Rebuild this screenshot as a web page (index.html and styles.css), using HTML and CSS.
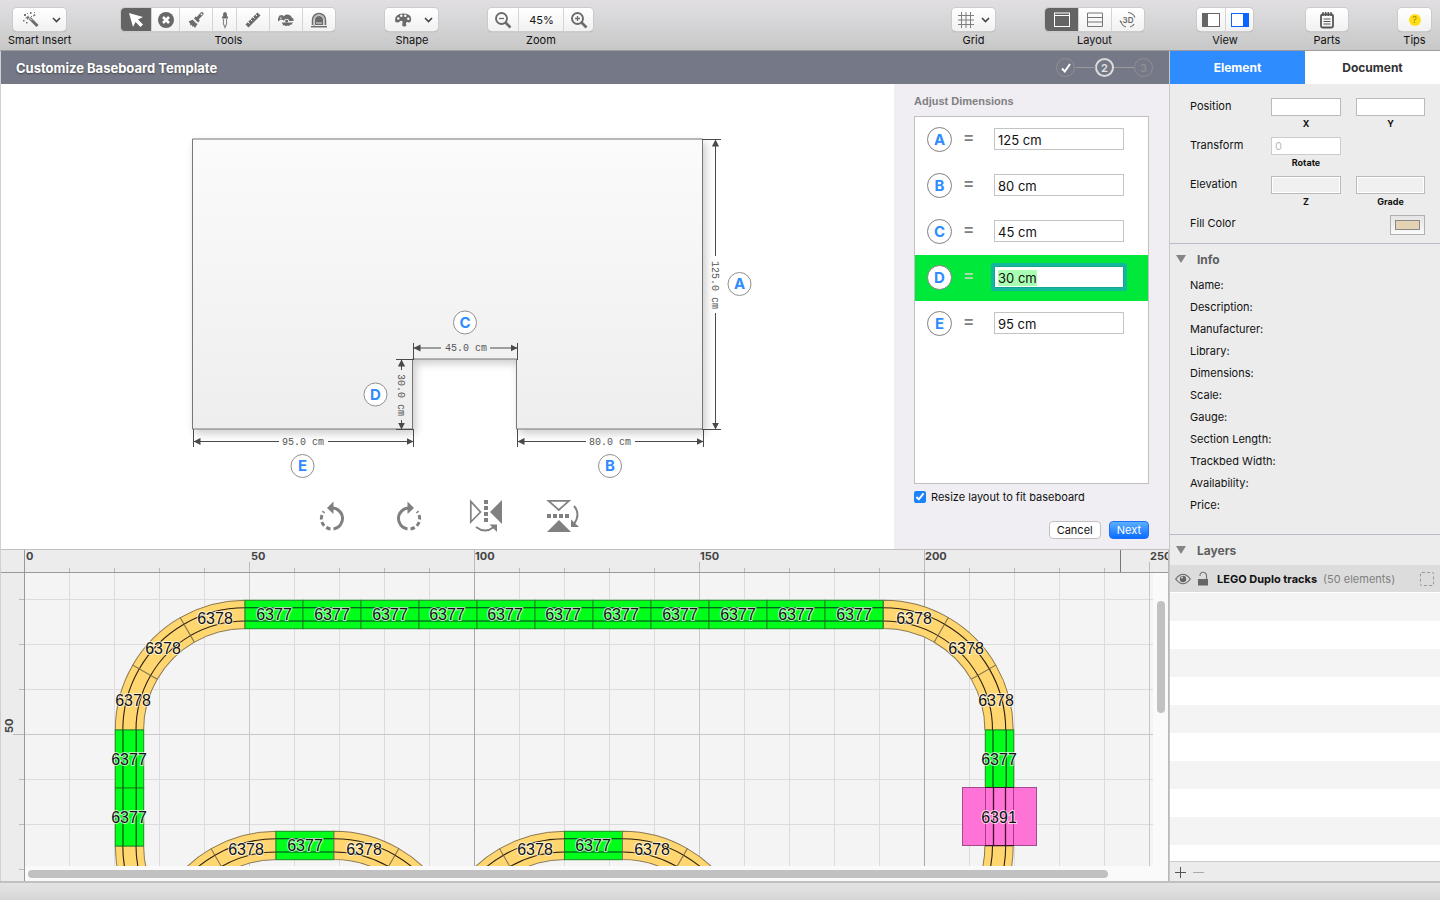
FILE: index.html
```html
<!DOCTYPE html>
<html lang="en">
<head>
    <meta charset="UTF-8">
    <meta name="viewport" content="width=device-width, initial-scale=1.0">
    <title>Customize Baseboard Template</title>
    <link rel="stylesheet" href="styles.css">
</head>
<body>
    <header class="toolbar">
        <div class="group">
            <div class="segments">
                <button class="menu-btn" aria-label="Smart Insert">
                    <svg width="18" height="18" viewBox="0 0 18 18"><path d="M7.500 7l8 8" stroke="#6b6b6b" stroke-width="3"/><path d="M6.800 6.300l3 3" stroke="#fff" stroke-width="1"/><g fill="#777"><path d="M5 5.500l1.500-1 .3 1.500 1.200 1-1.700.4-.8 1.600-.7-1.600-1.600-.4 1.300-1zM2 3h2v2H2zM8 1h1.500v2H8zM11 4l2-1 .5 1.500-2 1zM1 9h1.500v1.500H1zM4 11h1.500v1.500H4zM9 5h1v1H9zM12 1h1v1h-1zM5 2h1v1H5z"/></g></svg>
                    <svg width="9" height="6" viewBox="0 0 9 6"><path d="M1 1l3.500 3.500L8 1" fill="none" stroke="#444" stroke-width="1.600"/></svg>
                </button>
            </div>
            <span class="caption">Smart Insert</span>
        </div>
        <div class="group">
            <div class="segments tools">
                <button class="active" aria-label="Select"><svg width="18" height="18" viewBox="0 0 18 18"><path d="M2 2l14 4-5 2.500 5 5-2.500 2.500-5-5L6 16z" fill="#fff"/></svg></button>
                <button aria-label="Delete"><svg width="18" height="18" viewBox="0 0 18 18"><circle cx="9" cy="9" r="8" fill="#686868"/><path d="M6 6l6 6M12 6l-6 6" stroke="#fff" stroke-width="2.600"/></svg></button>
                <button aria-label="Brush"><svg width="18" height="18" viewBox="0 0 18 18"><path d="M1.500 10.500L6 8.500l4.500 4.500L8 17l-1.500-2-.8 1-1.200-2.200-1 1-.5-2.500z" fill="#6b6b6b"/><path d="M7 7.500l4 4 1.800-1.800-1-1.500 4.500-4.500q1-2-.8-2.400-.7-.6-2 .5L9.800 6 8.500 5.500z" fill="#6b6b6b"/><circle cx="14.500" cy="3.300" r=".9" fill="#fff"/><path d="M6 8.500l4 4" stroke="#fff"/></svg></button>
                <button aria-label="Eyedropper"><svg width="10" height="18" viewBox="0 0 10 18"><path d="M5 1q2 0 2 2.500l-.3 2H8V7.500H2V5.500h1.300L3 3.500Q3 1 5 1z" fill="#6b6b6b"/><path d="M3.500 8v5L5 16.500 6.500 13V8" fill="#fff" stroke="#888" stroke-width="1.200"/></svg></button>
                <button aria-label="Ruler"><svg width="18" height="18" viewBox="0 0 18 18"><path d="M1.500 13.500l12-12 3 3-12 12z" fill="#6b6b6b"/><path d="M4 11l1.500 1.500M6.500 8.500L8 10M9 6l1.500 1.500M11.500 3.500L13 5" stroke="#fff"/></svg></button>
                <button aria-label="Saw"><svg width="18" height="18" viewBox="0 0 18 18"><path d="M1 10.500V7.500l1.500-3 3-.5 1 1.500Q8 3.500 10 3.500q4 .3 5 3.500l1.500.5-1 1H17l-.5 1.500h-4.300a2.700 2.700 0 0 0-5.200-.3L5 8.500 3 9z" fill="#6b6b6b"/><path d="M2.500 7.800l1.800-2v2z" fill="#fff"/><circle cx="9.600" cy="10" r="1.500" fill="#6b6b6b"/><path d="M4.500 11.500h12l-1.500 1v1l-2 .3-1 1.200-1.500-.5-1.500.8-1.200-1-1.800.2-.3-1.500z" fill="#6b6b6b"/></svg></button>
                <button aria-label="Tunnel"><svg width="18" height="18" viewBox="0 0 18 18"><path d="M2.500 14V9a6.500 6.500 0 0 1 13 0v5" fill="#fff" stroke="#6b6b6b" stroke-width="1.500"/><path d="M5 14V9a4 4 0 0 1 8 0v5z" fill="#6b6b6b"/><path d="M4 15V9a5 5 0 0 1 10 0v5" fill="none" stroke="#888" stroke-width=".8"/><path d="M1 15.700h16" stroke="#6b6b6b" stroke-width="1.500"/><path d="M6 12h6" stroke="#fff" stroke-width=".8"/></svg></button>
            </div>
            <span class="caption">Tools</span>
        </div>
        <div class="group">
            <div class="segments">
                <button class="menu-btn" aria-label="Shape">
                    <svg width="18" height="18" viewBox="0 0 18 18"><path d="M1 9Q1 3 9 2.500q8 0 8.200 5.500-.2 4-2.700 3.500-1.500-1-2.500.5-.5 1.500.5 2-.5 2-3 1.500-2-1-1-3.500Q9 9 6.500 10 5 11.500 3 11.500 1 11.500 1 9z" fill="#6b6b6b"/><g fill="#fff"><circle cx="4.300" cy="7.500" r="1.200"/><circle cx="7.300" cy="4.800" r="1.200"/><circle cx="11.300" cy="4.800" r="1.200"/><circle cx="14.300" cy="7.800" r="1.200"/></g></svg>
                    <svg width="9" height="6" viewBox="0 0 9 6"><path d="M1 1l3.500 3.500L8 1" fill="none" stroke="#444" stroke-width="1.600"/></svg>
                </button>
            </div>
            <span class="caption">Shape</span>
        </div>
        <div class="group">
            <div class="segments zoom">
                <button aria-label="Zoom out"><svg width="18" height="18" viewBox="0 0 18 18"><circle cx="7.500" cy="7.500" r="5.500" fill="none" stroke="#6b6b6b" stroke-width="1.900"/><path d="M11.500 11.500l5 5" stroke="#6b6b6b" stroke-width="2.600"/><path d="M5 7.500h5" stroke="#6b6b6b" stroke-width="1.300"/></svg></button>
                <button class="zoom-value">45%</button>
                <button aria-label="Zoom in"><svg width="18" height="18" viewBox="0 0 18 18"><circle cx="7.500" cy="7.500" r="5.500" fill="none" stroke="#6b6b6b" stroke-width="1.900"/><path d="M11.500 11.500l5 5" stroke="#6b6b6b" stroke-width="2.600"/><path d="M5 7.500h5M7.500 5v5" stroke="#6b6b6b" stroke-width="1.300"/></svg></button>
            </div>
            <span class="caption">Zoom</span>
        </div>
        <div class="group push">
            <div class="segments">
                <button class="menu-btn grid-btn" aria-label="Grid">
                    <svg width="16" height="16" viewBox="0 0 16 16"><path d="M3.500 0v16M8 0v16M12.500 0v16M0 3.500h16M0 8h16M0 12.500h16" stroke="#7d7d7d"/></svg>
                    <svg width="9" height="6" viewBox="0 0 9 6"><path d="M1 1l3.500 3.500L8 1" fill="none" stroke="#444" stroke-width="1.600"/></svg>
                </button>
            </div>
            <span class="caption">Grid</span>
        </div>
        <div class="group">
            <div class="segments layout">
                <button class="active" aria-label="2D layout"><svg width="18" height="16" viewBox="0 0 18 16"><rect x="1.500" y="1" width="15" height="13.500" fill="none" stroke="#fff"/><path d="M2 3.500h14" stroke="#fff"/></svg></button>
                <button aria-label="Split layout"><svg width="18" height="16" viewBox="0 0 18 16"><path d="M1.500 1h15v13.500h-15zM2 5.500h14M2 10h14" fill="none" stroke="#777"/></svg></button>
                <button aria-label="3D layout"><svg width="18" height="18" viewBox="0 0 18 18"><path d="M9 1.500q5.500.5 6.800 5M2 10q.5 4.500 5 6M14.500 4l1.500 2.500M2 11.500L1 9.500M11 16q3-.8 4-3" fill="none" stroke="#777" stroke-width="1.200"/><text x="9" y="12" text-anchor="middle" class="icon-3d">3D</text></svg></button>
            </div>
            <span class="caption">Layout</span>
        </div>
        <div class="group spaced">
            <div class="segments view">
                <button aria-label="Left panel"><svg width="18" height="14" viewBox="0 0 18 14"><rect x=".5" y=".5" width="17" height="13" fill="#fff" stroke="#666"/><path d="M1 1h5v12H1z" fill="#666"/></svg></button>
                <button aria-label="Right panel"><svg width="18" height="14" viewBox="0 0 18 14"><rect x=".5" y=".5" width="17" height="13" fill="#fff" stroke="#0a66ff"/><path d="M12 1h5v12h-5z" fill="#0a66ff"/></svg></button>
            </div>
            <span class="caption">View</span>
        </div>
        <div class="group">
            <div class="segments">
                <button class="parts-btn" aria-label="Parts"><svg width="16" height="18" viewBox="0 0 16 18"><rect x="2" y="3.500" width="12" height="13" rx="1.500" fill="none" stroke="#555" stroke-width="1.800"/><path d="M4 1v4M6.700 1v4M9.300 1v4M12 1v4" stroke="#555" stroke-width="1.500"/><path d="M4.500 8h7M4.500 10.500h7M4.500 13h7" stroke="#555"/></svg></button>
            </div>
            <span class="caption">Parts</span>
        </div>
        <div class="group">
            <div class="segments">
                <button class="tips-btn" aria-label="Tips"><span class="tip-dot">?</span></button>
            </div>
            <span class="caption">Tips</span>
        </div>
    </header>

    <main class="workspace">
        <div class="editor">
            <div class="wizard-head">
                <h1>Customize Baseboard Template</h1>
                <ol class="steps">
                    <li class="done"><svg width="12" height="12" viewBox="0 0 12 12"><path d="M2 6.500L4.800 9.500 10 2" fill="none" stroke="#fff" stroke-width="2"/></svg></li>
                    <li class="current">2</li>
                    <li>3</li>
                </ol>
            </div>

            <section class="wizard">
                <div class="preview">
                    <svg class="board" width="641" height="400" viewBox="127 84 641 400">
                        <defs>
                            <linearGradient id="boardFill" x1="0" y1="0" x2="0" y2="1">
                                <stop offset="0" stop-color="#fbfbfb"/>
                                <stop offset="1" stop-color="#eee"/>
                            </linearGradient>
                            <marker id="arrow" viewBox="0 0 7 8" refX="7" refY="4" markerWidth="7" markerHeight="8" markerUnits="userSpaceOnUse" orient="auto">
                                <path d="M0 .4L7 4L0 7.600z" fill="#4a4a4a"/>
                            </marker>
                        </defs>
                        <path class="board-shape" d="M192.500 139H702.500V429H516.500V359H412.500V429H192.500z"/>
                        <!-- extension lines -->
                        <path class="dim" d="M702 139.500h19M702 429.500h19M193.500 429v18M413.500 429v18M517.500 429v18M703.500 429v18M413.500 343v17M517.500 343v17M396 359.500h17M396 429.500h17"/>
                        <g class="dim" marker-end="url(#arrow)">
                            <path d="M715.500 256V139.500"/><path d="M715.500 313V429.500"/>
                            <path d="M279 441.500H193.500"/><path d="M328 441.500H413.500"/>
                            <path d="M586 441.500H517.500"/><path d="M635 441.500H703.500"/>
                            <path d="M441 348H413.500"/><path d="M490 348H517.500"/>
                            <path d="M401.500 370V359.500"/><path d="M401.500 420V429.500"/>
                        </g>
                        <g class="dim-text">
                            <text x="303" y="445">95.0 cm</text>
                            <text x="610" y="445">80.0 cm</text>
                            <text x="466" y="351">45.0 cm</text>
                            <text transform="translate(712 285) rotate(90)">125.0 cm</text>
                            <text transform="translate(398 395) rotate(90)">30.0 cm</text>
                        </g>
                        <g class="pins">
                            <circle cx="739.500" cy="284" r="11.500"/><text x="739.500" y="289">A</text>
                            <circle cx="610" cy="466" r="11.500"/><text x="610" y="471">B</text>
                            <circle cx="465" cy="322.500" r="11.500"/><text x="465" y="328">C</text>
                            <circle cx="375.500" cy="394.500" r="11.500"/><text x="375.500" y="400">D</text>
                            <circle cx="302.500" cy="466" r="11.500"/><text x="302.500" y="471">E</text>
                        </g>
                    </svg>
                    <div class="transforms">
                        <button aria-label="Rotate left"><svg width="36" height="36" viewBox="0 0 36 36"><path d="M18 10A10.500 10.500 0 0 1 19.500 30.900" fill="none" stroke="#808080" stroke-width="3"/><path d="M19.500 3.500v12.500L13 10z" fill="#808080"/><path d="M16.500 30.900A10.500 10.500 0 0 1 10 13.500" fill="none" stroke="#808080" stroke-width="3" stroke-dasharray="4.500 2.500"/></svg></button>
                        <button aria-label="Rotate right"><svg width="36" height="36" viewBox="0 0 36 36"><path d="M18 10A10.500 10.500 0 0 0 16.500 30.900" fill="none" stroke="#808080" stroke-width="3"/><path d="M16.500 3.500v12.500L23 10z" fill="#808080"/><path d="M19.500 30.900A10.500 10.500 0 0 0 26 13.500" fill="none" stroke="#808080" stroke-width="3" stroke-dasharray="4.500 2.500"/></svg></button>
                        <button aria-label="Flip horizontal"><svg width="36" height="36" viewBox="0 0 36 36"><path d="M2.800 3.500v20.500L12.500 14z" fill="none" stroke="#808080" stroke-width="1.700"/><path d="M34 2v24L22 14z" fill="#808080"/><path d="M18 2v24" stroke="#808080" stroke-width="4" stroke-dasharray="4 2"/><path d="M8 29q9 7 18 0" fill="none" stroke="#808080" stroke-width="1.900"/><path d="M21.500 26.500H29V34z" fill="#808080"/></svg></button>
                        <button aria-label="Flip vertical"><svg width="36" height="36" viewBox="0 0 36 36"><path d="M3.500 2.800h20.500L13.800 12z" fill="none" stroke="#808080" stroke-width="1.700"/><path d="M2 34h24L14 22z" fill="#808080"/><path d="M2 18h24" stroke="#808080" stroke-width="4" stroke-dasharray="4 2"/><path d="M29 8q7 8 0 18" fill="none" stroke="#808080" stroke-width="1.900"/><path d="M26 21.500V29h8z" fill="#808080"/></svg></button>
                    </div>
                </div>

                <form class="dimensions">
                    <h2>Adjust Dimensions</h2>
                    <ul class="dim-list">
                        <li><label for="dimA"><span class="pin">A</span>=</label><input type="text" id="dimA" value="125 cm"></li>
                        <li><label for="dimB"><span class="pin">B</span>=</label><input type="text" id="dimB" value="80 cm"></li>
                        <li><label for="dimC"><span class="pin">C</span>=</label><input type="text" id="dimC" value="45 cm"></li>
                        <li class="selected"><label for="dimD"><span class="pin">D</span>=</label><input type="text" id="dimD" value="30 cm"></li>
                        <li><label for="dimE"><span class="pin">E</span>=</label><input type="text" id="dimE" value="95 cm"></li>
                    </ul>
                    <div class="resize">
                        <input type="checkbox" id="resize" checked>
                        <label for="resize">Resize layout to fit baseboard</label>
                    </div>
                    <div class="actions">
                        <button type="button">Cancel</button>
                        <button type="button" class="primary">Next</button>
                    </div>
                </form>
            </section>

            <section class="plan">
                <div class="corner"></div>
                <svg class="ruler-h">
                    <defs>
                        <pattern id="ticksH" width="45" height="24" patternUnits="userSpaceOnUse" x="-1"><path d="M.5 18v6" stroke="#bbb"/></pattern>
                    </defs>
                    <rect width="100%" height="24" fill="url(#ticksH)"/>
                    <path d="M224.500 12v12M1124.500 12v12M674.500 12v12" stroke="#bbb"/>
                    <path d="M449.500 0v24M899.500 0v24" stroke="#bbb"/>
                    <path d="M1095.500 0v24" stroke="#777"/>
                    <g class="ruler-text">
                        <text x="1" y="10">0</text>
                        <text x="226" y="10">50</text>
                        <text x="450" y="10">100</text>
                        <text x="675" y="10">150</text>
                        <text x="900" y="10">200</text>
                        <text x="1125" y="10">250</text>
                    </g>
                </svg>
                <svg class="ruler-v">
                    <path d="M18 26.500h6M18 71.500h6M18 116.500h6M12 161.500h12M18 206.500h6M18 251.500h6M18 296.500h6" stroke="#bbb"/>
                    <text class="ruler-text" transform="translate(12 160) rotate(-90)">50</text>
                </svg>

                <svg class="canvas">
                    <defs>
                        <pattern id="grid" width="45" height="45" patternUnits="userSpaceOnUse" x="44" y="26">
                            <path d="M.5 0v45M0 .5h45" stroke="#dcdcdc" fill="none"/>
                        </pattern>
                        <g id="straight">
                            <rect x="0" y="-14.200" width="58" height="28.400" fill="#00ff1a" stroke="#1a8a20"/>
                            <path d="M0-6.700h58M0 6.500h58" stroke="#032" stroke-width="1.100"/>
                        </g>
                        <!-- one 30 degree curve, its circle centred on the origin -->
                        <g id="curve" fill="none">
                            <path d="M0-129.700A129.700 129.700 0 0 0-64.850-112.300L-50.700-87.800A101.400 101.400 0 0 1 0-101.400z" fill="#ffd670" stroke="#8a7850"/>
                            <path d="M0-122.200A122.200 122.200 0 0 0-61.100-105.800M0-109A109 109 0 0 0-54.500-94.400" stroke="#2a2210" stroke-width="1.100"/>
                        </g>
                        <g id="arch">
                            <use href="#curve" transform="rotate(-60)"/>
                            <use href="#curve" transform="rotate(-30)"/>
                            <use href="#curve"/>
                            <use href="#straight" y="-115.500"/>
                            <g transform="translate(58 0)">
                                <use href="#curve" transform="rotate(30)"/>
                                <use href="#curve" transform="rotate(60)"/>
                            </g>
                        </g>
                    </defs>
                    <rect width="100%" height="100%" fill="url(#grid)"/>
                    <path d="M224.500 0v294M674.500 0v294M1124.500 0v294M0 161.500h1130" stroke="#c8c8c8"/>
                    <path d="M449.500 0v294M899.500 0v294" stroke="#a8a8a8"/>

                    <g transform="translate(220 157)">
                        <use href="#curve"/>
                        <use href="#curve" transform="rotate(-30)"/>
                        <use href="#curve" transform="rotate(-60)"/>
                    </g>
                    <g transform="translate(858.500 157)">
                        <use href="#curve" transform="rotate(30)"/>
                        <use href="#curve" transform="rotate(60)"/>
                        <use href="#curve" transform="rotate(90)"/>
                    </g>
                    <g transform="translate(220 41.500)">
                        <use href="#straight"/>
                        <use href="#straight" x="58"/>
                        <use href="#straight" x="116"/>
                        <use href="#straight" x="174"/>
                        <use href="#straight" x="232"/>
                        <use href="#straight" x="290"/>
                        <use href="#straight" x="348"/>
                        <use href="#straight" x="406"/>
                        <use href="#straight" x="464"/>
                        <use href="#straight" x="522"/>
                        <use href="#straight" x="580"/>
                    </g>
                    <use href="#curve" transform="translate(220 273) rotate(-90)"/>
                    <use href="#curve" transform="translate(858.500 273) rotate(120)"/>
                    <use href="#straight" transform="translate(104.500 157) rotate(90)"/>
                    <use href="#straight" transform="translate(104.500 215) rotate(90)"/>
                    <use href="#straight" transform="translate(974.500 157) rotate(90)"/>
                    <rect x="937.500" y="214.500" width="74" height="58" fill="#ff73d6" stroke="#a04c8a"/>
                    <path d="M960.500 215v58M988.500 215v58" stroke="#a83c86"/>
                    <path d="M968.500 215v58M980.500 215v58" stroke="#401030" stroke-width="1.300"/>
                    <path d="M960 214.500h29M960 272.500h29" stroke="#401030"/>
                    <use href="#arch" transform="translate(251 388)"/>
                    <use href="#arch" transform="translate(539.500 388)"/>

                    <g class="track-text">
                        <text x="190" y="51">6378</text><text x="138" y="81">6378</text><text x="108" y="133">6378</text>
                        <text x="249" y="47">6377</text><text x="307" y="47">6377</text><text x="365" y="47">6377</text>
                        <text x="422" y="47">6377</text><text x="480" y="47">6377</text><text x="538" y="47">6377</text>
                        <text x="596" y="47">6377</text><text x="655" y="47">6377</text><text x="713" y="47">6377</text>
                        <text x="771" y="47">6377</text><text x="829" y="47">6377</text>
                        <text x="889" y="51">6378</text><text x="941" y="81">6378</text><text x="971" y="133">6378</text>
                        <text x="104" y="192">6377</text><text x="104" y="250">6377</text>
                        <text x="974" y="192">6377</text><text x="974" y="250">6391</text>
                        <text x="221" y="282">6378</text><text x="280" y="278">6377</text><text x="339" y="282">6378</text>
                        <text x="510" y="282">6378</text><text x="568" y="278">6377</text><text x="627" y="282">6378</text>
                    </g>
                </svg>
                <div class="scroll-v"><span></span></div>
                <div class="scroll-h"><span></span></div>
            </section>
        </div>

        <aside class="inspector">
            <nav class="tabs">
                <button class="active">Element</button>
                <button>Document</button>
            </nav>
            <form class="props">
                <span class="name">Position</span>
                <div class="field"><input type="text" id="posX"><label for="posX">X</label></div>
                <div class="field"><input type="text" id="posY"><label for="posY">Y</label></div>
                <span class="name">Transform</span>
                <div class="field"><input type="text" id="rotate" placeholder="0" class="faint"><label for="rotate">Rotate</label></div>
                <div></div>
                <span class="name">Elevation</span>
                <div class="field"><input type="text" id="elevZ" disabled><label for="elevZ">Z</label></div>
                <div class="field"><input type="text" id="grade" disabled><label for="grade">Grade</label></div>
                <span class="name">Fill Color</span>
                <button type="button" class="color-well" aria-label="Fill Color"><span></span></button>
            </form>
            <section class="info">
                <h2>Info</h2>
                <ul>
                    <li>Name:</li>
                    <li>Description:</li>
                    <li>Manufacturer:</li>
                    <li>Library:</li>
                    <li>Dimensions:</li>
                    <li>Scale:</li>
                    <li>Gauge:</li>
                    <li>Section Length:</li>
                    <li>Trackbed Width:</li>
                    <li>Availability:</li>
                    <li>Price:</li>
                </ul>
            </section>
            <section class="layers">
                <h2>Layers</h2>
                <div class="layer">
                    <svg width="16" height="12" viewBox="0 0 16 12"><path d="M.7 6Q8-3.500 15.300 6 8 15.500.7 6z" fill="none" stroke="#666" stroke-width="1.200"/><circle cx="8" cy="6" r="3.200" fill="#666"/><circle cx="7" cy="4.500" r="1" fill="#dcdcdc"/></svg>
                    <svg width="12" height="16" viewBox="0 0 12 16"><path d="M1 8h10v6.500H1z" fill="#666"/><path d="M3 5V4.500a3.200 3.200 0 0 1 6.500 0V8" fill="none" stroke="#777" stroke-width="1.200"/></svg>
                    <strong>LEGO Duplo tracks</strong>
                    <span class="count">(50 elements)</span>
                    <span class="marquee"></span>
                </div>
                <div class="stripes"></div>
                <div class="layer-actions">
                    <button aria-label="Add layer"><svg width="12" height="12" viewBox="0 0 12 12"><path d="M0 6.500h11M5.500 1v11" stroke="#555"/></svg></button>
                    <button aria-label="Remove layer"><svg width="12" height="12" viewBox="0 0 12 12"><path d="M0 6.500h11" stroke="#aaa"/></svg></button>
                </div>
            </section>
        </aside>
    </main>

    <footer class="status"></footer>

    <script>
        // Start on the row being edited with its value selected
        let active = document.getElementById("dimD");
        active.focus();
        active.select();
    </script>
</body>
</html>
```
FILE: styles.css
```css
* {
    margin: 0;
    padding: 0;
    box-sizing: border-box;
}

body {
    height: 100vh;
    display: flex;
    flex-direction: column;
    overflow: hidden;
    font-family: Inter, "Liberation Sans", sans-serif;
    font-size: 11px;
    color: #111;
    background-color: #ececec;
}

button, input {
    font: inherit;
    color: inherit;
}

ul, ol {
    list-style: none;
}

svg {
    display: block;
    flex: none;
}

/* Toolbar */
.toolbar {
    display: flex;
    gap: 50px;
    padding: 8px 9px 2px 8px;
    background: linear-gradient(#e1dfe2, #c8c8c8);
    border-bottom: 1px solid #9c9c9c;
}

.group {
    display: flex;
    flex-direction: column;
    align-items: center;
    gap: 2px;
}

.push {
    margin-left: auto;
}

.spaced {
    padding: 0 3px;
}

.segments {
    display: flex;
    height: 23px;
    border-radius: 4px;
    background: linear-gradient(#fff, #f1f1f1);
    box-shadow: 0 0 0 1px #cbcbcb, 0 1px 1px #999;
}

.segments button {
    display: flex;
    align-items: center;
    justify-content: center;
    width: 33px;
    border: none;
    border-left: 1px solid #d4d4d4;
    background: none;
}

.segments button:first-child {
    border-left: none;
}

.segments .active {
    background-color: #646464;
    border-radius: 4px 0 0 4px;
}

.tools button:nth-child(1) {
    width: 30px;
}

.tools button:nth-child(2) {
    width: 28px;
}

.tools button:nth-child(4) {
    width: 24px;
}

.segments .menu-btn {
    width: 53px;
    gap: 12px;
    padding-left: 4px;
}

.segments .grid-btn {
    width: 43px;
    gap: 7px;
    padding-left: 0;
}

.zoom button {
    width: 30px;
}

.segments .zoom-value {
    width: 45px;
}

.view button {
    width: 28px;
}

.segments .parts-btn {
    width: 42px;
}

.segments .tips-btn {
    width: 33px;
}

.tip-dot {
    width: 12px;
    height: 12px;
    border-radius: 50%;
    background-color: #ffde17;
    color: #a08000;
    font-size: 9px;
    line-height: 12px;
}

.icon-3d {
    font-size: 8px;
    font-weight: 600;
    fill: #666;
}

.caption {
    line-height: 15px;
}

/* Workspace */
.workspace {
    flex: 1;
    min-height: 0;
    display: flex;
}

.editor {
    flex: 1;
    min-width: 0;
    display: flex;
    flex-direction: column;
    border-left: 1px solid #d0d0d0;
}

.wizard-head {
    display: flex;
    justify-content: space-between;
    align-items: center;
    height: 33px;
    padding: 0 16px 0 15px;
    background-color: #757987;
}

.wizard-head h1 {
    font-size: 13px;
    font-weight: 700;
    color: #fff;
    text-shadow: 0 1px 2px #444;
}

.steps {
    display: flex;
    align-items: center;
}

.steps li {
    display: flex;
    align-items: center;
    justify-content: center;
    width: 19px;
    height: 19px;
    border: 1px solid #8f8f8f;
    border-radius: 50%;
    font-weight: 600;
    color: #8f8f8f;
}

.steps li + li {
    position: relative;
    margin-left: 20px;
}

.steps li + li::before {
    content: "";
    position: absolute;
    right: 100%;
    width: 20px;
    margin-right: 1px;
    border-top: 1px solid #9a9a9a;
}

.steps .current {
    border: 2px solid #dcdcdc;
    color: #e4e4e4;
}

.wizard {
    display: flex;
}

.preview {
    flex: 1;
    display: flex;
    flex-direction: column;
    align-items: center;
    gap: 14px;
    background-color: #fff;
}

.board-shape {
    fill: url(#boardFill);
    stroke: #777;
    filter: drop-shadow(3px 4px 4px rgba(0, 0, 0, 0.2));
}

.dim {
    fill: none;
    stroke: #4a4a4a;
}

.dim-text {
    font-family: "Liberation Mono", monospace;
    font-size: 10px;
    fill: #555;
    text-anchor: middle;
}

.pins circle {
    fill: #fff;
    stroke: #909090;
}

.pins text {
    font-size: 15px;
    font-weight: 700;
    fill: #2f8cff;
    text-anchor: middle;
}

.transforms {
    display: flex;
    gap: 41px;
}

.transforms button {
    border: none;
    background: none;
}

/* Dimension form */
.dimensions {
    width: 275px;
    padding: 10px 20px;
    background-color: #f0eef3;
}

.dimensions h2 {
    font-family: "Liberation Sans", sans-serif;
    font-size: 11px;
    line-height: 14px;
    color: #808080;
    margin-bottom: 8px;
}

.dim-list {
    height: 368px;
    border: 1px solid #c0c0c0;
    background-color: #fff;
}

.dim-list li {
    display: flex;
    align-items: center;
    height: 46px;
    padding: 0 24px 2px 12px;
}

.dim-list label {
    flex: 1;
    display: flex;
    align-items: center;
    gap: 12px;
    font-family: "Liberation Sans", sans-serif;
    font-size: 16px;
    font-weight: 700;
    color: #808080;
}

.pin {
    width: 25px;
    height: 25px;
    border: 1px solid #808080;
    border-radius: 50%;
    background-color: #fff;
    color: #2f8cff;
    font-family: Inter, sans-serif;
    font-size: 15px;
    line-height: 23px;
    text-align: center;
}

.dim-list input {
    width: 130px;
    height: 22px;
    padding: 2px 3px 0;
    border: 1px solid #c4c4c4;
    background-color: #fff;
    font-size: 13px;
    outline: none;
}

.dim-list .selected {
    background-color: #00e83a;
}

.selected label {
    color: #b8d8b8;
}

.dim-list input:focus {
    border-color: #12a590;
    border-radius: 1px;
    box-shadow: 0 0 0 3px #12b89c;
}

.dim-list input::selection {
    background-color: #a9ffb2;
    color: #111;
}

.resize {
    display: flex;
    align-items: center;
    gap: 5px;
    margin-top: 6px;
    line-height: 14px;
}

.resize input {
    width: 12px;
    height: 12px;
    accent-color: #1a82fb;
}

.actions {
    display: flex;
    justify-content: flex-end;
    gap: 8px;
    margin-top: 17px;
}

.actions button {
    height: 18px;
    padding: 0 7px;
    border: 1px solid #c2c2c2;
    border-radius: 4px;
    background-color: #fff;
}

.actions .primary {
    border-color: #1a6ffb;
    background: linear-gradient(#5cb0ff, #0a6cff);
    color: #fff;
}

/* Track plan */
.plan {
    flex: 1;
    min-height: 0;
    display: grid;
    grid-template-columns: 24px 1fr 15px;
    grid-template-rows: 23px 1fr 15px;
    border-top: 1px solid #c0c0c0;
    border-right: 1px solid #b8b8b8;
    background-color: #fafafa;
}

.corner, .ruler-h {
    border-bottom: 1px solid #999;
    background-color: #ececec;
}

.corner, .ruler-v {
    border-right: 1px solid #999;
    background-color: #ececec;
}

.ruler-h {
    grid-column: 2 / 4;
    width: 100%;
    height: 23px;
}

.ruler-v {
    grid-row: 2 / 4;
    width: 24px;
    height: 100%;
}

.ruler-text {
    font-size: 11px;
    font-weight: 700;
    fill: #444;
}

.canvas {
    width: 100%;
    height: 100%;
    background-color: #f4f4f4;
}

.track-text {
    font-family: "Liberation Sans", sans-serif;
    font-size: 16px;
    fill: #111;
    stroke: rgba(255, 255, 255, 0.7);
    stroke-width: 2px;
    paint-order: stroke;
    text-anchor: middle;
}

.scroll-v {
    padding: 28px 3px 0 4px;
}

.scroll-v span {
    display: block;
    height: 112px;
    border-radius: 4px;
    background-color: #c1c1c1;
}

.scroll-h {
    grid-column: 2 / 4;
    padding: 4px 3px 0;
}

.scroll-h span {
    display: block;
    width: 95%;
    height: 8px;
    border-radius: 4px;
    background-color: #c1c1c1;
}

/* Inspector */
.inspector {
    width: 271px;
    display: flex;
    flex-direction: column;
    border-left: 1px solid #c8c8c8;
    background-color: #ececec;
}

.tabs {
    display: flex;
    height: 33px;
}

.tabs button {
    flex: 1;
    border: none;
    background-color: #fff;
    font-size: 12px;
    font-weight: 700;
    color: #333;
}

.tabs .active {
    background-color: #2f8cff;
    color: #fff;
}

.props {
    display: grid;
    grid-template-columns: 66px 70px 69px;
    column-gap: 15px;
    row-gap: 5px;
    padding: 14px 15px 8px 20px;
    border-bottom: 1px solid #bcbcc8;
}

.props .name {
    line-height: 17px;
}

.field {
    display: flex;
    flex-direction: column;
}

.field input {
    width: 100%;
    height: 18px;
    padding: 0 3px;
    border: 1px solid #bbb;
    background-color: #fff;
}

.field .faint {
    border-color: #ccc;
}

.field input::placeholder {
    color: #bbb;
}

.field input:disabled {
    background-color: #f0f0f0;
    box-shadow: inset 0 0 0 1px #fff;
}

.field label {
    font-size: 9px;
    font-weight: 700;
    line-height: 16px;
    text-align: center;
}

.color-well {
    grid-column: 3;
    justify-self: end;
    width: 35px;
    height: 20px;
    padding: 4px;
    border: 1px solid #b0b0b0;
    background: linear-gradient(#e4e4e4, #fafafa);
}

.color-well span {
    display: block;
    height: 10px;
    border: 1px solid #888;
    background-color: #e3d2b4;
}

.info h2, .layers h2 {
    display: flex;
    align-items: center;
    gap: 11px;
    height: 30px;
    padding-left: 6px;
    font-size: 12px;
    font-weight: 700;
    color: #606060;
}

.info h2::before, .layers h2::before {
    content: "";
    border: 5px solid transparent;
    border-top: 8px solid #858585;
    border-bottom: none;
}

.info {
    height: 291px;
    border-bottom: 1px solid #b8bcc8;
}

.info li {
    padding-left: 20px;
    line-height: 22px;
}

.layers {
    flex: 1;
    min-height: 0;
    display: flex;
    flex-direction: column;
}

.layer {
    display: flex;
    align-items: center;
    gap: 6px;
    height: 28px;
    padding: 0 6px 0 5px;
    background-color: #dcdcdc;
    border-bottom: 1px solid #fff;
}

.layer strong {
    margin-left: 2px;
    font-weight: 700;
}

.count {
    color: #808080;
}

.marquee {
    width: 14px;
    height: 14px;
    margin-left: auto;
    border: 1px dashed #999;
    border-radius: 2px;
}

.stripes {
    flex: 1;
    background: repeating-linear-gradient(#f4f4f4 0 28px, #fff 28px 56px);
}

.layer-actions {
    display: flex;
    align-items: center;
    gap: 6px;
    height: 20px;
    padding-left: 5px;
    border-top: 1px solid #ccc;
}

.layer-actions button {
    border: none;
    background: none;
}

.status {
    height: 19px;
    border-top: 2px solid #c0c0c0;
    background: linear-gradient(#e4e4e4, #d6d6d6);
}
```
